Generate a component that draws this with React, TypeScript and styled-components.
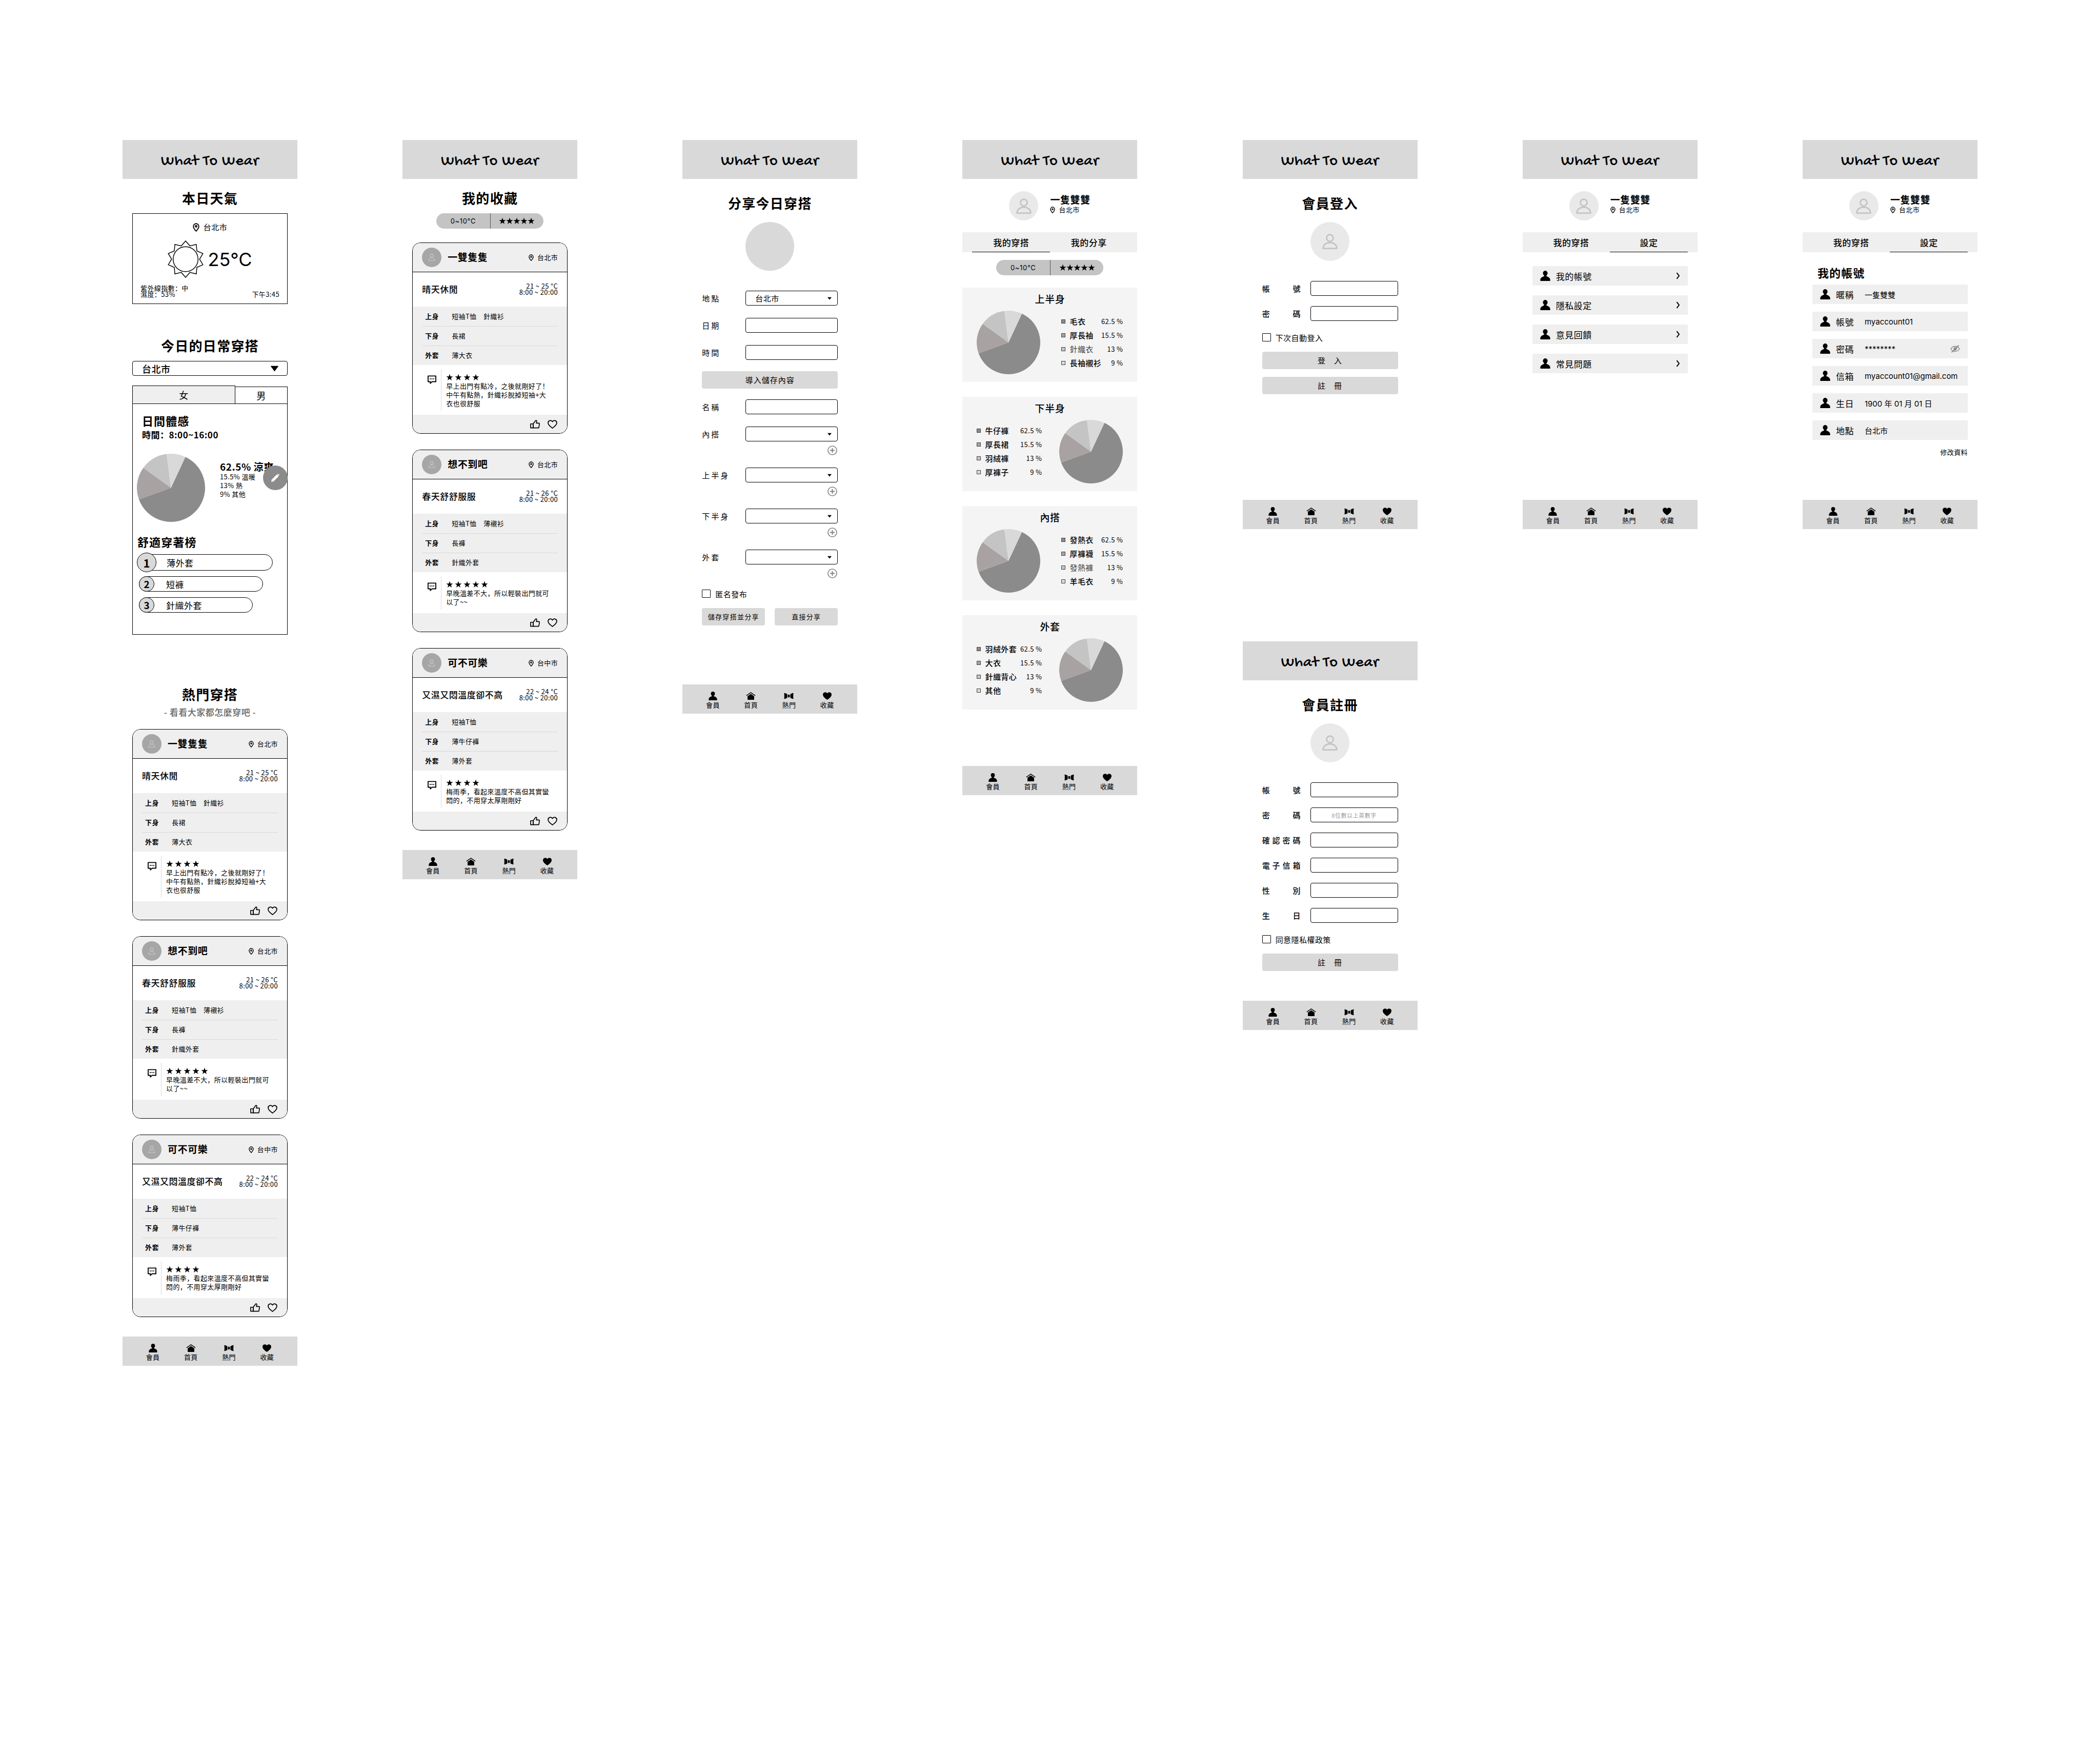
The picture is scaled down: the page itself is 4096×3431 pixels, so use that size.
import React, { useId } from "react";
import styled, { createGlobalStyle, css } from "styled-components";

const cjk = `"Noto Sans CJK SC", "Noto Sans CJK TC", sans-serif`;
const latin = `Inter, "Noto Sans CJK SC", sans-serif`;

const c = {
  ink: "#000",
  bar: "#d9d9d9",
  soft: "#efefef",
  panel: "#f4f4f4",
  chip: "#c4c4c4",
  muted: "#666",
  slice: ["#8b8b8b", "#a8a2a2", "#c4c4c4", "#d9d9d9"],
};

const type = (size: number, weight = 400, track = "0.03em") => css`
  font-size: ${size}px;
  font-weight: ${weight};
  letter-spacing: ${track};
`;

const Global = createGlobalStyle`
  *, *::before, *::after { box-sizing: border-box; }
  body { margin: 0; background: #fff; color: ${c.ink}; font-family: ${cjk}; }
  h1, h2, h3, h4, p, ul, ol, dl, dd, dt { margin: 0; padding: 0; }
  ul, ol { list-style: none; }
  button, input, select { font: inherit; color: inherit; margin: 0; }
  button { cursor: pointer; }
  a { color: inherit; text-decoration: none; }
  svg { display: block; flex: none; }
`;

/* ---------- page ---------- */

const Board = styled.main`
  display: grid;
  grid-template-columns: repeat(7, minmax(0, 341px));
  justify-content: space-between;
  align-items: start;
  padding: 273px 239px;
`;

const Stack = styled.div`
  display: flex;
  flex-direction: column;
  gap: 219px;
`;

const Screen = styled.section`
  display: flex;
  flex-direction: column;
`;

const Body = styled.div<{ $inset?: number }>`
  display: flex;
  flex-direction: column;
  padding: 0 ${(p) => p.$inset ?? 19}px;
`;

const TopBar = styled.header`
  display: flex;
  align-items: center;
  justify-content: center;
  height: 76px;
  padding-top: 10px;
  background: ${c.bar};
`;

const Brand = styled.h1`
  ${type(30, 500)}
  font-family: "Gochi Hand", "Lato", sans-serif;
  line-height: 36px;
  white-space: nowrap;
`;

const Title = styled.h2<{ $top?: number; $bottom?: number }>`
  ${type(26, 700, "0.05em")}
  line-height: 38px;
  text-align: center;
  margin: ${(p) => p.$top ?? 18}px 0 ${(p) => p.$bottom ?? 11}px;
`;

/* ---------- icons ---------- */

const PinIcon = ({ large }: { large?: boolean }) => (
  <svg width={large ? 13 : 10} height={large ? 17 : 13} viewBox="0 0 12 16" fill="none" stroke="currentColor" strokeWidth="1.7">
    <path d="M6 15C3.2 12 1 9 1 6.2a5 5 0 0 1 10 0C11 9 8.800 12 6 15Z" strokeLinejoin="round" />
    <circle cx="6" cy="6.2" r="1.5" />
  </svg>
);

const PersonSolid = ({ size }: { size: number }) => (
  <svg width={size} height={size} viewBox="0 0 20 20" fill="currentColor">
    <ellipse cx="10" cy="4.8" rx="4.6" ry="4.8" />
    <path d="M7.600 8h4.800v3c3 .6 6.600 2.400 7.200 6.200.2 1.200.2 2.800-.6 2.800H1c-.8 0-.8-1.600-.6-2.800C1 13.400 4.600 11.600 7.600 11Z" />
  </svg>
);

const PersonLine = ({ size, color, width = 2.2 }: { size: number; color: string; width?: number }) => (
  <svg width={size} height={size} viewBox="0 0 24 24" fill="none" stroke={color} strokeWidth={width}>
    <circle cx="12" cy="6.5" r="5.2" />
    <path d="M1.300 22.800c0-5.600 4.900-9.200 10.700-9.200s10.700 3.600 10.700 9.200Z" strokeLinejoin="round" />
  </svg>
);

const HomeIcon = () => (
  <svg width="19" height="17" viewBox="0 0 20 18" fill="currentColor">
    <path d="M10 1 .4 7.800l.9 1.300L10 3l8.700 6.100.9-1.300Z" />
    <path d="M10 4.800 3.200 9.600V17h13.600V9.600Z" />
  </svg>
);

const BowIcon = () => (
  <svg width="19" height="17" viewBox="0 0 20 18" fill="currentColor">
    <path d="M.4 3.600C.4 3 1 2.800 1.600 3L6.800 5v8l-5.200 2c-.6.2-1.200 0-1.200-.6.6-3.600.6-7.200 0-10.800Z" />
    <path d="M19.600 3.600c0-.6-.6-.8-1.200-.6l-5.200 2v8l5.200 2c.6.2 1.200 0 1.200-.6-.6-3.600-.6-7.200 0-10.800Z" />
    <rect x="8" y="6" width="4" height="6" rx="1.6" />
  </svg>
);

const HEART = "M10 17C6 14 1 10.500 1 6a4.800 4.800 0 0 1 9-2.200A4.800 4.800 0 0 1 19 6c0 4.500-5 8-9 11Z";

const HeartSolid = () => (
  <svg width="19" height="17" viewBox="0 0 20 18" fill="currentColor">
    <path d={HEART} />
  </svg>
);

const HeartLine = () => (
  <svg width="19" height="17" viewBox="0 0 20 18" fill="none" stroke="currentColor" strokeWidth="1.9">
    <path d={HEART} strokeLinejoin="round" />
  </svg>
);

const ThumbIcon = () => (
  <svg width="19" height="17" viewBox="0 0 20 18" fill="none" stroke="currentColor" strokeWidth="1.8" strokeLinejoin="round">
    <path d="M6.200 8.200 11.400 1.400c1.500-.6 2.500.4 2.200 1.800L12.800 6.800h5.400c.8 0 1 .6.900 1.200l-1 7.400c-.1.800-.6 1.200-1.400 1.200H6.200Z" />
    <path d="M1 8.200h5.200v8.400H1Z" />
  </svg>
);

const ChatIcon = () => (
  <svg width="17" height="17" viewBox="0 0 18 18" fill="none" stroke="currentColor" strokeWidth="2">
    <path d="M1 1.500h16v11.800H9l-3.400 3.400v-3.400H1Z" strokeLinejoin="round" />
    <path d="M4.400 7.400h2M8 7.400h2M11.600 7.400h2" />
  </svg>
);

const Star = () => (
  <svg width="14" height="14" viewBox="0 0 24 24" fill="currentColor">
    <path d="m12 .9 2.800 8h8.400l-6.700 5.100 2.500 8.100-7-4.900-7 4.900 2.500-8.100L.8 8.900h8.400Z" />
  </svg>
);

const Caret = ({ w, h }: { w: number; h: number }) => (
  <svg width={w} height={h} viewBox="0 0 10 8" preserveAspectRatio="none" fill="currentColor">
    <path d="M.6 0h8.800c.5 0 .7.500.4.900L5.400 7.500c-.2.400-.6.400-.8 0L.2.900C-.1.500.1 0 .6 0Z" />
  </svg>
);

const PlusCircle = () => (
  <svg width="19" height="19" viewBox="0 0 20 20" fill="none" stroke="#808080" strokeWidth="1.7">
    <circle cx="10" cy="10" r="9" />
    <path d="M10 5.200v9.600M5.200 10h9.600" strokeWidth="2" />
  </svg>
);

const Chevron = () => (
  <svg width="8" height="14" viewBox="0 0 8 14" fill="none" stroke="currentColor" strokeWidth="2">
    <path d="M1.500 1.200 6 7l-4.500 5.800" />
  </svg>
);

const PencilIcon = () => (
  <svg width="18" height="18" viewBox="0 0 18 18" fill="#fff">
    <path d="M1 17l1-4.600L11.400 3c.4-.4 1-.4 1.400 0L15 5.200c.4.400.4 1 0 1.400L5.600 16Z" />
    <path d="M13.200 2.200 14.600.8l2.600 2.600-1.400 1.400Z" />
  </svg>
);

const EyeOffIcon = () => (
  <svg width="19" height="15" viewBox="0 0 20 16" fill="none" stroke="#888" strokeWidth="1.5">
    <path d="M1 8c2.200-3.600 5.400-5.400 9-5.400S16.800 4.400 19 8c-2.200 3.600-5.400 5.400-9 5.400S3.200 11.600 1 8Z" />
    <circle cx="10" cy="8" r="2.6" fill="#888" />
    <path d="M17.500.8 2.500 15.200" strokeWidth="2" />
  </svg>
);

const SunIcon = () => {
  const pts = Array.from({ length: 20 }, (_, i) => {
    const r = i % 2 ? 27.6 : 36;
    const a = (i * Math.PI) / 10;
    return `${(37 + r * Math.sin(a)).toFixed(2)},${(37 - r * Math.cos(a)).toFixed(2)}`;
  }).join(" ");
  return (
    <svg width="70" height="73" viewBox="2 0 70 74" fill="none" stroke="currentColor" strokeWidth="1.5">
      <polygon points={pts} />
      <circle cx="37" cy="37" r="24.6" />
    </svg>
  );
};

const Pie = ({ size }: { size: number }) => {
  const shares = [62.5, 15.5, 13, 9];
  let at = 25;
  const point = (deg: number) => {
    const a = (deg * Math.PI) / 180;
    return `${(50 + 50 * Math.sin(a)).toFixed(3)} ${(50 - 50 * Math.cos(a)).toFixed(3)}`;
  };
  return (
    <svg width={size} height={size} viewBox="0 0 100 100" role="img" aria-label="比例圖">
      {shares.map((s, i) => {
        const from = at;
        at += s * 3.6;
        return (
          <path key={i} fill={c.slice[i]} d={`M50 50L${point(from)}A50 50 0 ${s > 50 ? 1 : 0} 1 ${point(at)}Z`} />
        );
      })}
    </svg>
  );
};

/* ---------- bottom navigation ---------- */

const NavBar = styled.nav<{ $top: number }>`
  display: grid;
  grid-template-columns: repeat(4, 1fr);
  height: 57px;
  margin-top: ${(p) => p.$top}px;
  padding: 14px 22px 0;
  background: ${c.bar};
`;

const NavLink = styled.a`
  ${type(13)}
  display: flex;
  flex-direction: column;
  align-items: center;
  line-height: 18px;
`;

const Nav = ({ top }: { top: number }) => (
  <NavBar $top={top}>
    <NavLink href="#member"><PersonSolid size={17} />會員</NavLink>
    <NavLink href="#home"><HomeIcon />首頁</NavLink>
    <NavLink href="#hot"><BowIcon />熱門</NavLink>
    <NavLink href="#saved"><HeartSolid />收藏</NavLink>
  </NavBar>
);

const Header = () => (
  <TopBar>
    <Brand>What To Wear</Brand>
  </TopBar>
);

/* ---------- place tag ---------- */

const PlaceTag = styled.span<{ $large?: boolean }>`
  ${(p) => type(p.$large ? 15 : 13)}
  display: inline-flex;
  align-items: center;
  justify-content: center;
  gap: ${(p) => (p.$large ? 8 : 7)}px;
  line-height: ${(p) => (p.$large ? 22 : 18)}px;
`;

const Place = ({ name, large }: { name: string; large?: boolean }) => (
  <PlaceTag $large={large}>
    <PinIcon large={large} />
    {name}
  </PlaceTag>
);

/* ---------- weather ---------- */

const Weather = styled.section`
  display: flex;
  flex-direction: column;
  padding: 15px 15px 12px;
  border: 1px solid ${c.ink};
`;

const Reading = styled.div`
  display: flex;
  align-items: center;
  justify-content: center;
  gap: 8px;
  margin: 15px 0 14px;
`;

const Degrees = styled.strong`
  ${type(36, 400, "0")}
  font-family: ${latin};
  line-height: 44px;
`;

const WeatherFoot = styled.div`
  ${type(13)}
  display: flex;
  align-items: flex-end;
  justify-content: space-between;
  line-height: 12px;
`;

/* ---------- select ---------- */

const SelectBox = styled.div<{ $gap: number }>`
  position: relative;
  height: 29px;
  svg {
    position: absolute;
    right: ${(p) => p.$gap}px;
    top: 50%;
    transform: translateY(-50%);
    pointer-events: none;
  }
`;

const SelectField = styled.select<{ $big?: boolean }>`
  ${(p) => (p.$big ? type(18, 500) : type(15))}
  appearance: none;
  width: 100%;
  height: 100%;
  padding: 0 18px;
  line-height: 24px;
  border: 1px solid ${c.ink};
  border-radius: 4px;
  background: #fff;
`;

const Select = ({ id, label, value, big }: { id?: string; label?: string; value: string; big?: boolean }) => (
  <SelectBox $gap={big ? 18 : 12}>
    <SelectField id={id} aria-label={label} $big={big} defaultValue={value}>
      <option value={value}>{value}</option>
    </SelectField>
    <Caret w={big ? 15 : 8} h={big ? 11 : 5} />
  </SelectBox>
);

/* ---------- daily panel ---------- */

const PanelTabs = styled.div`
  display: flex;
  align-items: flex-end;
  margin-top: 19px;
`;

const PanelTab = styled.button<{ $on?: boolean }>`
  ${type(18)}
  flex: ${(p) => (p.$on ? "0 0 201px" : "1")};
  height: ${(p) => (p.$on ? 35 : 33)}px;
  padding: 0;
  border: solid ${c.ink};
  border-width: ${(p) => (p.$on ? "1px 1px 0" : "1px 1px 0 0")};
  background: ${(p) => (p.$on ? c.soft : "#fff")};
`;

const Panel = styled.div`
  position: relative;
  display: flex;
  flex-direction: column;
  padding: 19px 8px 42px;
  border: 1px solid ${c.ink};
`;

const PanelTitle = styled.h3<{ $flush?: boolean }>`
  ${type(22, 700, "0.05em")}
  line-height: 26px;
  padding-left: ${(p) => (p.$flush ? 1 : 10)}px;
`;

const PanelTime = styled.p`
  ${type(17, 700)}
  line-height: 26px;
  margin-top: 2px;
  padding-left: 10px;
`;

const Feel = styled.div`
  display: flex;
  align-items: flex-start;
  gap: 29px;
  margin: 24px 0 25px;
`;

const FeelList = styled.ul`
  ${type(13)}
  padding-top: 14px;
  line-height: 17px;
  white-space: nowrap;
`;

const FeelTop = styled.li`
  ${type(19, 700)}
  line-height: 22px;
`;

const EditButton = styled.button`
  position: absolute;
  top: 120px;
  right: -1px;
  display: flex;
  align-items: center;
  justify-content: center;
  width: 48px;
  height: 48px;
  padding: 0;
  border: 0;
  border-radius: 50%;
  background: #8b8b8b;
`;

const Ranks = styled.ol`
  display: flex;
  flex-direction: column;
  gap: 11px;
  margin-top: 12px;
  padding-left: 4px;
`;

const Rank = styled.li<{ $first?: boolean; $w: number }>`
  ${type(17)}
  display: flex;
  align-items: center;
  gap: ${(p) => (p.$first ? 20 : 23)}px;
  width: ${(p) => p.$w}%;
  height: ${(p) => (p.$first ? 32 : 30)}px;
  border: 1px solid ${c.ink};
  border-radius: 16px;
`;

const RankNo = styled.span<{ $first?: boolean }>`
  ${(p) => type(p.$first ? 22 : 19, 700, "0")}
  display: flex;
  flex: none;
  align-items: center;
  justify-content: center;
  width: ${(p) => (p.$first ? 38 : 30)}px;
  height: ${(p) => (p.$first ? 38 : 30)}px;
  margin-left: ${(p) => (p.$first ? -5 : -1)}px;
  border: 1px solid ${c.ink};
  border-radius: 50%;
  background: ${c.bar};
  line-height: 28px;
`;

/* ---------- outfit cards ---------- */

const Lead = styled.p`
  ${type(17, 500)}
  color: ${c.muted};
  line-height: 22px;
  text-align: center;
`;

const Cards = styled.div<{ $top: number }>`
  display: flex;
  flex-direction: column;
  gap: 31px;
  margin-top: ${(p) => p.$top}px;
`;

const CardBox = styled.article`
  overflow: hidden;
  border: 1px solid ${c.ink};
  border-radius: 16px;
`;

const CardHead = styled.header`
  display: flex;
  align-items: center;
  gap: 12px;
  height: 57px;
  padding: 0 18px;
  border-bottom: 1px solid ${c.ink};
  background: ${c.soft};
`;

const Avatar = styled.span`
  display: flex;
  align-items: center;
  justify-content: center;
  width: 38px;
  height: 38px;
  border-radius: 50%;
  background: #a6a6a6;
`;

const UserName = styled.h3`
  ${type(19, 700)}
  flex: 1;
  padding-bottom: 2px;
  line-height: 26px;
`;

const CardTitle = styled.div`
  display: flex;
  align-items: center;
  justify-content: space-between;
  height: 67px;
  padding: 0 18px 2px;
`;

const Mood = styled.h4`
  ${type(17, 500)}
  line-height: 24px;
`;

const Range = styled.p`
  ${type(13)}
  line-height: 12px;
  text-align: right;
`;

const Wear = styled.dl`
  padding: 0 18px;
  background: ${c.soft};
`;

const WearRow = styled.div`
  ${type(13)}
  display: flex;
  align-items: center;
  height: 38px;
  padding: 0 0 2px 6px;
  & + & { border-top: 1px solid ${c.bar}; }
  dt { width: 52px; font-weight: 700; }
`;

const Review = styled.div`
  display: flex;
  padding: 8px 18px 7px;
`;

const ReviewMark = styled.div`
  width: 37px;
  padding: 12px 0 0 11px;
`;

const ReviewText = styled.div`
  ${type(13)}
  flex: 1;
  padding: 7px 14px 7px 9px;
  border-left: 1px solid ${c.bar};
  line-height: 17px;
`;

const Stars = styled.div<{ $gap?: number }>`
  display: flex;
  align-items: center;
  gap: ${(p) => p.$gap ?? 0}px;
  height: 17px;
`;

const CardFoot = styled.footer`
  display: flex;
  align-items: center;
  justify-content: flex-end;
  gap: 15px;
  height: 36px;
  padding: 0 19px;
  background: ${c.soft};
`;

const IconButton = styled.button`
  display: flex;
  padding: 0;
  border: 0;
  background: none;
`;

type Outfit = {
  user: string;
  city: string;
  mood: string;
  temp: string;
  wear: [string, string][];
  stars: number;
  note: string;
};

const outfits: Outfit[] = [
  {
    user: "一雙隻隻", city: "台北市", mood: "晴天休閒", temp: "21 ~ 25 °C",
    wear: [["上身", "短袖T恤　針織衫"], ["下身", "長裙"], ["外套", "薄大衣"]],
    stars: 4, note: "早上出門有點冷，之後就剛好了！中午有點熱，針織衫脫掉短袖+大衣也很舒服",
  },
  {
    user: "想不到吧", city: "台北市", mood: "春天舒舒服服", temp: "21 ~ 26 °C",
    wear: [["上身", "短袖T恤　薄襯衫"], ["下身", "長褲"], ["外套", "針織外套"]],
    stars: 5, note: "早晚溫差不大，所以輕裝出門就可以了~~",
  },
  {
    user: "可不可樂", city: "台中市", mood: "又濕又悶溫度卻不高", temp: "22 ~ 24 °C",
    wear: [["上身", "短袖T恤"], ["下身", "薄牛仔褲"], ["外套", "薄外套"]],
    stars: 4, note: "梅雨季，看起來溫度不高但其實蠻悶的，不用穿太厚剛剛好",
  },
];

const StarRow = ({ n, gap }: { n: number; gap?: number }) => (
  <Stars $gap={gap} role="img" aria-label={`${n} 顆星`}>
    {Array.from({ length: n }, (_, i) => <Star key={i} />)}
  </Stars>
);

const OutfitCards = ({ top }: { top: number }) => (
  <Cards $top={top}>
    {outfits.map((o) => (
      <CardBox key={o.user}>
        <CardHead>
          <Avatar><PersonLine size={14} color="#c4c4c4" /></Avatar>
          <UserName>{o.user}</UserName>
          <Place name={o.city} />
        </CardHead>
        <CardTitle>
          <Mood>{o.mood}</Mood>
          <Range>{o.temp}<br />8:00 ~ 20:00</Range>
        </CardTitle>
        <Wear>
          {o.wear.map(([k, v]) => (
            <WearRow key={k}><dt>{k}</dt><dd>{v}</dd></WearRow>
          ))}
        </Wear>
        <Review>
          <ReviewMark><ChatIcon /></ReviewMark>
          <ReviewText>
            <StarRow n={o.stars} gap={3} />
            <p>{o.note}</p>
          </ReviewText>
        </Review>
        <CardFoot>
          <IconButton aria-label="讚"><ThumbIcon /></IconButton>
          <IconButton aria-label="收藏"><HeartLine /></IconButton>
        </CardFoot>
      </CardBox>
    ))}
  </Cards>
);

/* ---------- filter chip ---------- */

const Chip = styled.div<{ $top?: number }>`
  display: grid;
  grid-template-columns: 1fr 1fr;
  align-self: center;
  width: 209px;
  height: 30px;
  margin-top: ${(p) => p.$top ?? 0}px;
  border-radius: 15px;
  background: ${c.chip};
`;

const ChipHalf = styled.button`
  ${type(13, 400, "0.05em")}
  display: flex;
  align-items: center;
  justify-content: center;
  padding: 0;
  border: 0;
  background: none;
  font-family: ${latin};
  & + & { border-left: 1px solid #555; }
`;

const Filter = ({ top }: { top?: number }) => (
  <Chip $top={top}>
    <ChipHalf>0~10°C</ChipHalf>
    <ChipHalf><StarRow n={5} /></ChipHalf>
  </Chip>
);

/* ---------- forms ---------- */

const Disc = styled.div<{ $size: number; $tone: string }>`
  display: flex;
  align-items: center;
  justify-content: center;
  align-self: center;
  flex: none;
  width: ${(p) => p.$size}px;
  height: ${(p) => p.$size}px;
  border-radius: 50%;
  background: ${(p) => p.$tone};
`;

const Form = styled.form`
  display: flex;
  flex-direction: column;
  margin-top: 39px;
`;

const FieldGroup = styled.div<{ $below: number }>`
  display: flex;
  flex-direction: column;
  gap: 24px;
  margin-bottom: ${(p) => p.$below}px;
`;

const ShareRow = styled.div`
  display: grid;
  grid-template-columns: 85px 1fr;
  align-items: center;
`;

const ShareLabel = styled.label`
  ${type(15, 400, "3px")}
  line-height: 22px;
`;

const TextField = styled.input`
  ${type(11, 400, "0.05em")}
  width: 100%;
  height: 29px;
  padding: 0 8px;
  border: 1px solid ${c.ink};
  border-radius: 4px;
  background: #fff;
  text-align: center;
  &::placeholder { color: #999; opacity: 1; }
`;

const AddLine = styled.div`
  display: flex;
  justify-content: flex-end;
  padding: 8px 1px 0 0;
`;

const GreyButton = styled.button<{ $small?: boolean }>`
  ${(p) => (p.$small ? type(13, 400, "0.1em") : type(15, 400, "1px"))}
  height: 34px;
  padding: 0;
  border: 0;
  border-radius: 4px;
  background: ${c.bar};
  line-height: 22px;
`;

const Actions = styled.div<{ $column?: boolean }>`
  display: grid;
  grid-template-columns: ${(p) => (p.$column ? "1fr" : "1fr 1fr")};
  gap: ${(p) => (p.$column ? 15 : 19)}px;
  margin-top: 20px;
`;

const CheckLabel = styled.label`
  ${type(15)}
  display: flex;
  align-items: center;
  gap: 9px;
  height: 16px;
`;

const CheckBox = styled.input.attrs({ type: "checkbox" })`
  appearance: none;
  flex: none;
  width: 17px;
  height: 16px;
  border: 1px solid ${c.ink};
  border-radius: 1px;
  background: #fff;
`;

const SharePlain = ({ label }: { label: string }) => {
  const id = useId();
  return (
    <ShareRow>
      <ShareLabel htmlFor={id}>{label}</ShareLabel>
      <TextField id={id} />
    </ShareRow>
  );
};

const SharePick = ({ label, value = "", more }: { label: string; value?: string; more?: boolean }) => {
  const id = useId();
  return (
    <div>
      <ShareRow>
        <ShareLabel htmlFor={id}>{label}</ShareLabel>
        <Select id={id} value={value} />
      </ShareRow>
      {more && (
        <AddLine>
          <IconButton type="button" aria-label={`新增${label}`}><PlusCircle /></IconButton>
        </AddLine>
      )}
    </div>
  );
};

const AccountRows = styled.div`
  display: flex;
  flex-direction: column;
  gap: 20px;
  margin-bottom: 24px;
`;

const AccountRow = styled.div`
  display: grid;
  grid-template-columns: 75px 1fr;
  column-gap: 19px;
  align-items: center;
`;

const SpreadLabel = styled.label`
  ${type(15, 500, "0")}
  line-height: 22px;
  text-align-last: justify;
`;

const AccountField = ({ label, hint }: { label: string; hint?: string }) => {
  const id = useId();
  return (
    <AccountRow>
      <SpreadLabel htmlFor={id}>{label}</SpreadLabel>
      <TextField id={id} placeholder={hint} />
    </AccountRow>
  );
};

const AccountScreen = ({ title, fields, check, buttons, navTop }: {
  title: string; fields: [string, string?][]; check: string; buttons: string[]; navTop: number;
}) => (
  <Screen>
    <Header />
    <Body $inset={38}>
      <Title $top={28} $bottom={18}>{title}</Title>
      <Disc $size={76} $tone="#e9e9e9"><PersonLine size={30} color="#c4c4c4" /></Disc>
      <Form onSubmit={(e) => e.preventDefault()}>
        <AccountRows>
          {fields.map(([l, h]) => <AccountField key={l} label={l} hint={h} />)}
        </AccountRows>
        <CheckLabel><CheckBox />{check}</CheckLabel>
        <Actions $column>
          {buttons.map((b) => <GreyButton key={b}>{b}</GreyButton>)}
        </Actions>
      </Form>
    </Body>
    <Nav top={navTop} />
  </Screen>
);

/* ---------- profile ---------- */

const ProfileBox = styled.div`
  display: flex;
  align-items: center;
  gap: 23px;
  height: 57px;
  margin: 24px 0 23px;
  padding-left: 91px;
`;

const ProfileText = styled.div`
  display: flex;
  flex-direction: column;
  align-items: flex-start;
  padding-bottom: 7px;
  h3 { ${type(19, 700)} line-height: 22px; }
`;

const Tabs = styled.div`
  display: grid;
  grid-template-columns: 1fr 1fr;
  height: 39px;
  padding: 0 19px;
  background: ${c.soft};
`;

const Tab = styled.button<{ $on?: boolean }>`
  ${type(17, 500)}
  padding: 0;
  border: 0;
  border-bottom: 1px solid ${(p) => (p.$on ? c.ink : "transparent")};
  background: none;
`;

const ProfileHead = ({ second, on }: { second: string; on: 0 | 1 }) => (
  <>
    <ProfileBox>
      <Disc $size={57} $tone="#e9e9e9"><PersonLine size={30} color="#c4c4c4" /></Disc>
      <ProfileText>
        <h3>一隻雙雙</h3>
        <Place name="台北市" />
      </ProfileText>
    </ProfileBox>
    <Tabs>
      <Tab $on={on === 0}>我的穿搭</Tab>
      <Tab $on={on === 1}>{second}</Tab>
    </Tabs>
  </>
);

/* ---------- statistics ---------- */

const StatList = styled.div`
  display: flex;
  flex-direction: column;
  gap: 29px;
  margin-top: 24px;
`;

const StatBox = styled.section`
  padding: 8px 28px 15px;
  background: ${c.panel};
  h3 { ${type(19, 500)} line-height: 28px; text-align: center; margin-bottom: 9px; }
`;

const StatBody = styled.div<{ $flip?: boolean }>`
  display: flex;
  flex-direction: ${(p) => (p.$flip ? "row-reverse" : "row")};
  align-items: center;
  justify-content: space-between;
  height: 124px;
`;

const StatLegend = styled.ul<{ $flip?: boolean }>`
  width: ${(p) => (p.$flip ? 127 : 120)}px;
  padding-bottom: 2px;
`;

const StatItem = styled.li<{ $faint?: boolean }>`
  ${(p) => type(15, p.$faint ? 400 : 500)}
  display: flex;
  align-items: center;
  gap: 8px;
  line-height: 27px;
  span { flex: 1; white-space: nowrap; color: ${(p) => (p.$faint ? "#444" : c.ink)}; }
  b { ${type(13)} margin-left: -8px; white-space: nowrap; }
`;

const Swatch = styled.i<{ $i: number }>`
  flex: none;
  width: 8px;
  height: 8px;
  border: 1px solid #444;
  background: ${(p) => c.slice[p.$i]};
`;

const stats: { title: string; items: string[]; faint?: boolean }[] = [
  { title: "上半身", items: ["毛衣", "厚長袖", "針織衣", "長袖襯衫"], faint: true },
  { title: "下半身", items: ["牛仔褲", "厚長裙", "羽絨褲", "厚褲子"] },
  { title: "內搭", items: ["發熱衣", "厚褲襪", "發熱褲", "羊毛衣"], faint: true },
  { title: "外套", items: ["羽絨外套", "大衣", "針織背心", "其他"] },
];
const percents = ["62.5 %", "15.5 %", "13 %", "9 %"];

/* ---------- settings ---------- */

const RowList = styled.ul<{ $gap: number; $top: number }>`
  display: flex;
  flex-direction: column;
  gap: ${(p) => p.$gap}px;
  margin-top: ${(p) => p.$top}px;
`;

const rowCss = css`
  display: flex;
  align-items: center;
  height: 38px;
  padding: 0 15px;
  background: ${c.soft};
  & > svg:first-child { margin-right: 11px; }
`;

const LinkRow = styled.a`
  ${type(17)}
  ${rowCss}
  & > svg:last-child { margin-left: auto; }
`;

const InfoRow = styled.li`
  ${rowCss}
  ${IconButton} { margin-left: auto; }
`;

const InfoKey = styled.span`
  ${type(17)}
  width: 56px;
`;

const InfoValue = styled.span`
  ${type(15, 400, "0")}
  font-family: ${latin};
  white-space: nowrap;
`;

const AccountTitle = styled.h2`
  ${type(22, 700, "0.05em")}
  line-height: 30px;
  margin-top: 24px;
  padding-left: 10px;
`;

const EditLink = styled.a`
  ${type(13)}
  align-self: flex-end;
  margin-top: 15px;
  line-height: 18px;
`;

const info: [string, string][] = [
  ["暱稱", "一隻雙雙"],
  ["帳號", "myaccount01"],
  ["密碼", "********"],
  ["信箱", "myaccount01@gmail.com"],
  ["生日", "1900 年 01 月 01 日"],
  ["地點", "台北市"],
];

/* ---------- app ---------- */

export default function App() {
  return (
    <>
      <Global />
      <Board>
        <Screen>
          <Header />
          <Body>
            <Title>本日天氣</Title>
            <Weather>
              <Place name="台北市" large />
              <Reading><SunIcon /><Degrees>25°C</Degrees></Reading>
              <WeatherFoot>
                <p>紫外線指數：中<br />濕度：53%</p>
                <p>下午3:45</p>
              </WeatherFoot>
            </Weather>
            <Title $top={62}>今日的日常穿搭</Title>
            <Select label="城市" value="台北市" big />
            <PanelTabs>
              <PanelTab $on>女</PanelTab>
              <PanelTab>男</PanelTab>
            </PanelTabs>
            <Panel>
              <PanelTitle>日間體感</PanelTitle>
              <PanelTime>時間：8:00~16:00</PanelTime>
              <Feel>
                <Pie size={133} />
                <FeelList>
                  <FeelTop>62.5% 涼爽</FeelTop>
                  <li>15.5% 溫暖</li>
                  <li>13% 熱</li>
                  <li>9% 其他</li>
                </FeelList>
              </Feel>
              <PanelTitle $flush>舒適穿著榜</PanelTitle>
              <Ranks>
                <Rank $first $w={93}><RankNo $first>1</RankNo>薄外套</Rank>
                <Rank $w={86}><RankNo>2</RankNo>短褲</Rank>
                <Rank $w={79}><RankNo>3</RankNo>針織外套</Rank>
              </Ranks>
              <EditButton aria-label="編輯"><PencilIcon /></EditButton>
            </Panel>
            <Title $top={97} $bottom={5}>熱門穿搭</Title>
            <Lead>- 看看大家都怎麼穿吧 -</Lead>
            <OutfitCards top={22} />
          </Body>
          <Nav top={38} />
        </Screen>

        <Screen>
          <Header />
          <Body>
            <Title>我的收藏</Title>
            <Filter />
            <OutfitCards top={27} />
          </Body>
          <Nav top={38} />
        </Screen>

        <Screen>
          <Header />
          <Body $inset={38}>
            <Title $top={28} $bottom={18}>分享今日穿搭</Title>
            <Disc $size={95} $tone={c.bar} />
            <Form onSubmit={(e) => e.preventDefault()}>
              <FieldGroup $below={22}>
                <SharePick label="地點" value="台北市" />
                <SharePlain label="日期" />
                <SharePlain label="時間" />
              </FieldGroup>
              <FieldGroup $below={21}>
                <GreyButton type="button">導入儲存內容</GreyButton>
              </FieldGroup>
              <FieldGroup $below={22}>
                <SharePlain label="名稱" />
                <SharePick label="內搭" more />
                <SharePick label="上半身" more />
                <SharePick label="下半身" more />
                <SharePick label="外套" more />
              </FieldGroup>
              <CheckLabel><CheckBox />匿名發布</CheckLabel>
              <Actions>
                <GreyButton $small>儲存穿搭並分享</GreyButton>
                <GreyButton $small>直接分享</GreyButton>
              </Actions>
            </Form>
          </Body>
          <Nav top={115} />
        </Screen>

        <Screen>
          <Header />
          <ProfileHead second="我的分享" on={0} />
          <Body $inset={0}>
            <Filter top={15} />
            <StatList>
              {stats.map((s, i) => {
                const flip = i % 2 === 1;
                return (
                  <StatBox key={s.title}>
                    <h3>{s.title}</h3>
                    <StatBody $flip={flip}>
                      <Pie size={124} />
                      <StatLegend $flip={flip}>
                        {s.items.map((name, k) => (
                          <StatItem key={name} $faint={s.faint && k === 2}>
                            <Swatch $i={k} /><span>{name}</span><b>{percents[k]}</b>
                          </StatItem>
                        ))}
                      </StatLegend>
                    </StatBody>
                  </StatBox>
                );
              })}
            </StatList>
          </Body>
          <Nav top={110} />
        </Screen>

        <Stack>
          <AccountScreen
            title="會員登入"
            fields={[["帳號"], ["密碼"]]}
            check="下次自動登入"
            buttons={["登　入", "註　冊"]}
            navTop={206}
          />
          <AccountScreen
            title="會員註冊"
            fields={[["帳號"], ["密碼", "8位數以上英數字"], ["確認密碼"], ["電子信箱"], ["性別"], ["生日"]]}
            check="同意隱私權政策"
            buttons={["註　冊"]}
            navTop={58}
          />
        </Stack>

        <Screen>
          <Header />
          <ProfileHead second="設定" on={1} />
          <Body>
            <RowList $gap={19} $top={27}>
              {["我的帳號", "隱私設定", "意見回饋", "常見問題"].map((t) => (
                <li key={t}>
                  <LinkRow href="#setting"><PersonSolid size={20} />{t}<Chevron /></LinkRow>
                </li>
              ))}
            </RowList>
          </Body>
          <Nav top={247} />
        </Screen>

        <Screen>
          <Header />
          <ProfileHead second="設定" on={1} />
          <Body>
            <AccountTitle>我的帳號</AccountTitle>
            <RowList $gap={15} $top={9}>
              {info.map(([k, v]) => (
                <InfoRow key={k}>
                  <PersonSolid size={20} />
                  <InfoKey>{k}</InfoKey>
                  <InfoValue>{v}</InfoValue>
                  {k === "密碼" && <IconButton aria-label="顯示密碼"><EyeOffIcon /></IconButton>}
                </InfoRow>
              ))}
            </RowList>
            <EditLink href="#edit">修改資料</EditLink>
          </Body>
          <Nav top={84} />
        </Screen>
      </Board>
    </>
  );
}
